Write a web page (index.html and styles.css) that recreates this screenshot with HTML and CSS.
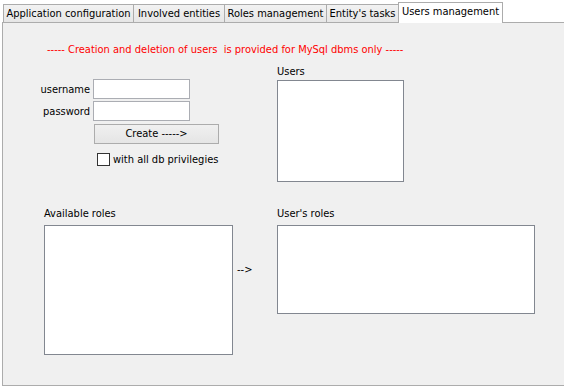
FILE: index.html
```html
<!DOCTYPE HTML>
<html lang='en'>
<head>
<meta charset='utf-8'>
<title>Users management</title>
<link rel="stylesheet" href="styles.css">
</head>
<body>
<!--tab strip starts here-->
<div class='tabs'>
<div class='tab tab_app'>Application configuration</div>
<div class='tab tab_entities'>Involved entities</div>
<div class='tab tab_roles'>Roles management</div>
<div class='tab tab_tasks'>Entity's tasks</div>
<div class='tab tab_users active'>Users management</div>
</div>
<!--tab strip ends here-->
<!--panel starts here-->
<div class='panel'>
<div class='notice'>----- Creation and deletion of users&nbsp; is provided for MySql dbms only -----</div>
<div class='top'>
<div class='form'>
<label class='field_label'>username</label>
<div class='input'></div>
<label class='field_label'>password</label>
<div class='input'></div>
<div class='button'>Create -----&gt;</div>
<div class='check'><span class='check_box'></span>with all db privilegies</div>
</div>
<div class='users'>
<div class='caption'>Users</div>
<div class='list users_list'></div>
</div>
</div>
<div class='roles'>
<div class='caption'>Available roles</div>
<div></div>
<div class='caption'>User's roles</div>
<div class='list available_list'></div>
<div class='arrow'>--&gt;</div>
<div class='list user_roles_list'></div>
</div>
</div>
<!--panel ends here-->
</body>
</html>
```

FILE: styles.css
```css
body
{
margin:0;
width:564px;
height:387px;
overflow:hidden;
background:#ffffff;
color:#000000;
font-family:"DejaVu Sans Condensed","DejaVu Sans",sans-serif;
font-size:11px;
}
.tabs
{
display:flex;
align-items:flex-end;
height:22px;
padding-left:3px;
}
.tab
{
box-sizing:border-box;
height:18px;
line-height:17px;
margin-right:-1px;
border:1px solid #acacac;
border-bottom:none;
background:linear-gradient(#f2f2f2,#e6e6e6);
text-align:center;
white-space:nowrap;
}
.tab_app
{
width:131px;
}
.tab_entities
{
width:92px;
}
.tab_roles
{
width:103px;
}
.tab_tasks
{
width:73px;
}
.tab_users
{
width:105px;
}
.active
{
position:relative;
height:21px;
line-height:18px;
margin-bottom:-1px;
background:#ffffff;
}
.panel
{
box-sizing:border-box;
width:562px;
height:364px;
margin-left:2px;
padding-top:20px;
border:1px solid #acacac;
border-right:none;
background:#f0f0f0;
}
.notice
{
margin-left:44px;
line-height:14px;
color:#ff0000;
white-space:nowrap;
}
.top
{
display:flex;
margin-top:8px;
}
.form
{
display:grid;
grid-template-columns:50px 97px;
grid-auto-rows:min-content;
column-gap:3px;
row-gap:2px;
width:237px;
margin-left:37px;
padding-top:14px;
}
.field_label
{
align-self:center;
text-align:right;
white-space:nowrap;
}
.input
{
box-sizing:border-box;
height:20px;
border:1px solid #abadb3;
background:#ffffff;
}
.button
{
grid-column:2;
box-sizing:border-box;
width:125px;
height:20px;
margin-top:1px;
margin-left:1px;
line-height:18px;
border:1px solid #acacac;
background:linear-gradient(#f0f0f0,#e5e5e5);
text-align:center;
white-space:nowrap;
}
.check
{
grid-column:2;
display:flex;
align-items:center;
gap:3px;
margin-top:7px;
margin-left:4px;
white-space:nowrap;
}
.check_box
{
flex-shrink:0;
box-sizing:border-box;
width:13px;
height:13px;
border:1px solid #333333;
background:#ffffff;
}
.caption
{
line-height:14px;
white-space:nowrap;
}
.users .caption
{
margin-bottom:1px;
}
.list
{
box-sizing:border-box;
border:1px solid #828790;
background:#ffffff;
}
.users_list
{
width:127px;
height:102px;
}
.roles
{
display:grid;
grid-template-columns:189px 44px 258px;
row-gap:4px;
margin-top:25px;
margin-left:41px;
align-items:start;
}
.available_list
{
height:130px;
}
.arrow
{
margin-top:38px;
padding-left:4px;
line-height:14px;
}
.user_roles_list
{
height:89px;
}
```
